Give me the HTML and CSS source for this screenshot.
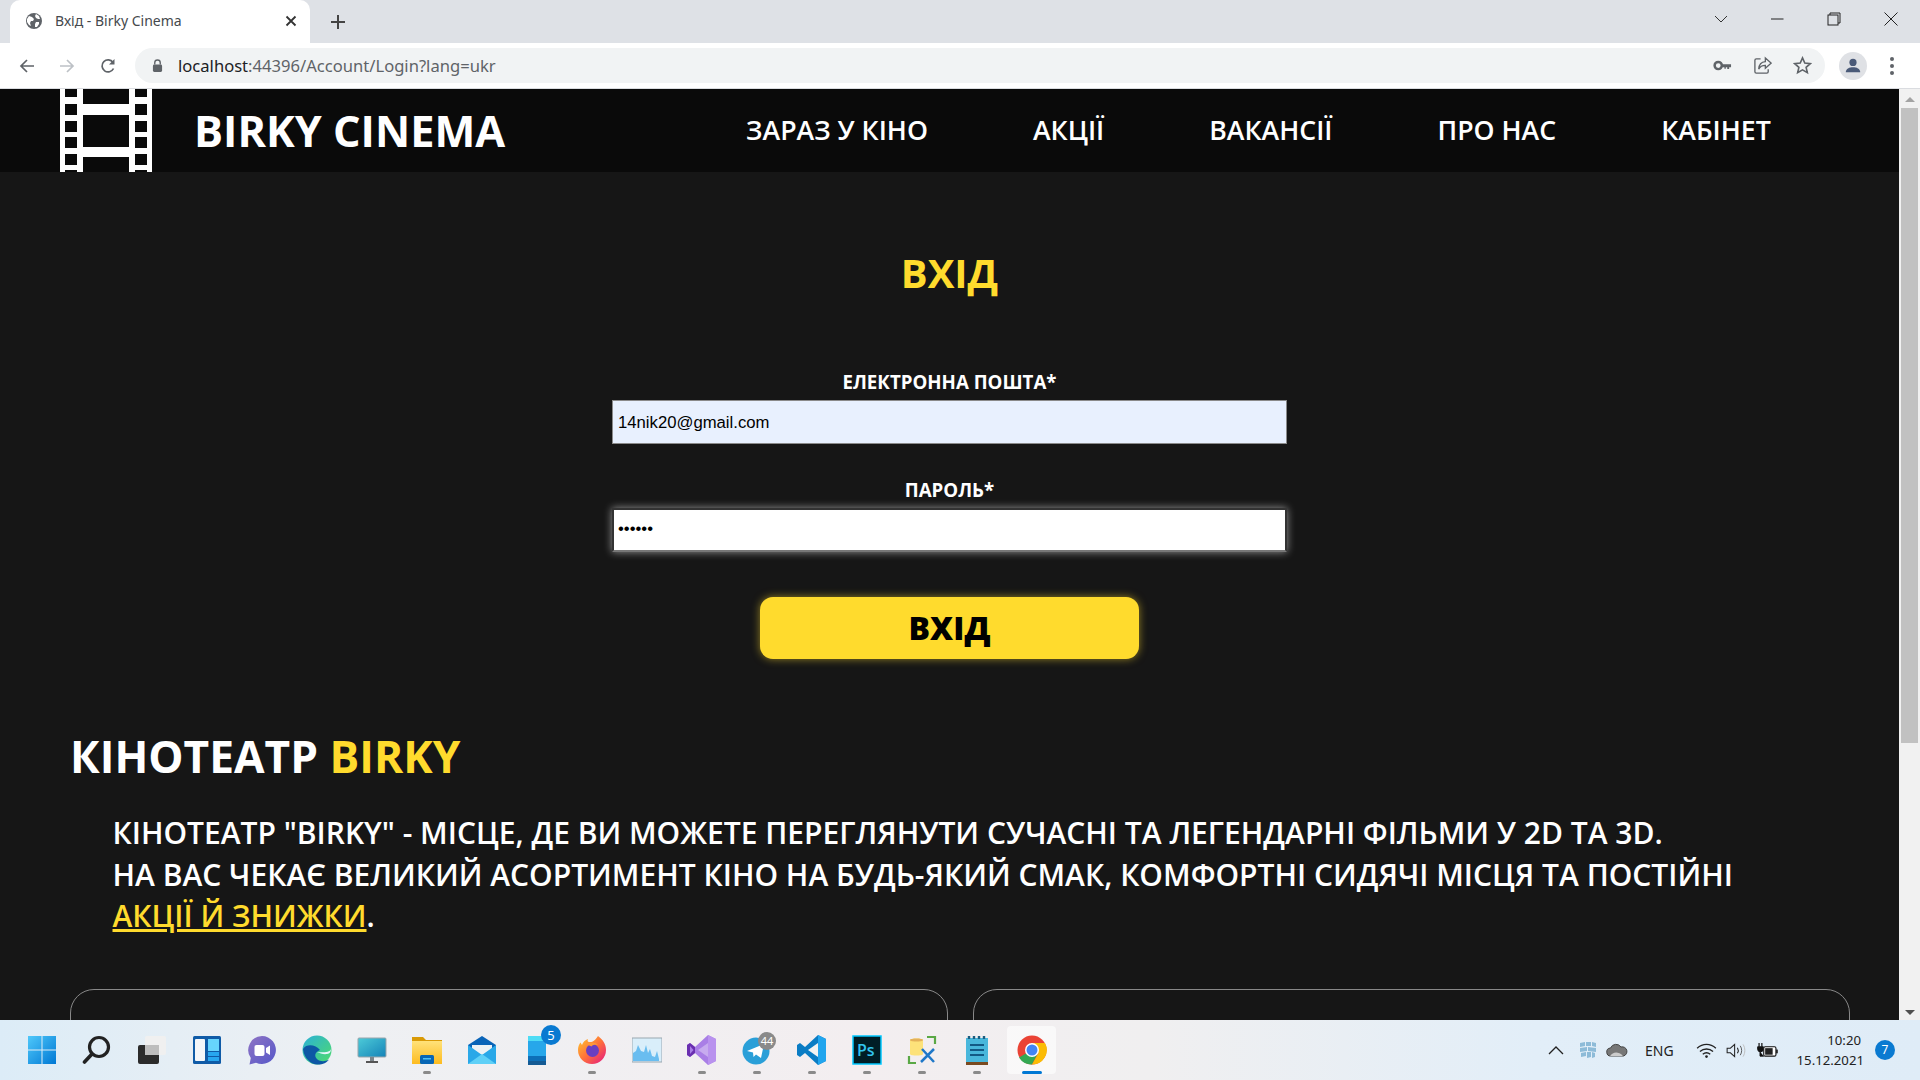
FILE: index.html
```html
<!DOCTYPE html>
<html lang="uk">
<head>
  <meta charset="UTF-8">
  <title>Вхід - Birky Cinema</title>
  <link rel="stylesheet" href="styles.css">
</head>
<body>
  <div class="tabstrip">
    <div class="tab">
      <svg class="favicon" viewBox="0 0 16 16"><circle cx="8" cy="8" r="8" fill="#5f6368"/><path d="M3 3l3 1 2 2-1 2-2 0-1 2 1 3-2-1-2-3 0-3zM10 1l3 2 1 3-2 0-2-1-1-2zM10 9l3 0 0 2-2 3-2 0 0-3z" fill="#fff"/></svg>
      <span class="tab-title">Вхід - Birky Cinema</span>
      <svg class="tab-close" viewBox="0 0 12 12"><path d="M1.5 1.5l9 9M10.5 1.5l-9 9" stroke="#333" stroke-width="1.8"/></svg>
    </div>
    <svg class="new-tab" viewBox="0 0 16 16"><path d="M8 1v14M1 8h14" stroke="#444" stroke-width="2"/></svg>
    <div class="win-controls">
      <svg class="win-btn" viewBox="0 0 14 14"><path d="M1 4l6 6 6-6" fill="none" stroke="#333" stroke-width="1"/></svg>
      <svg class="win-btn" viewBox="0 0 14 14"><path d="M1 7h12.500" stroke="#222" stroke-width="1"/></svg>
      <svg class="win-btn" viewBox="0 0 14 14"><rect x="1" y="3" width="10" height="10" fill="none" stroke="#222"/><path d="M3 3V1h10v10h-2" fill="none" stroke="#222"/></svg>
      <svg class="win-btn" viewBox="0 0 14 14"><path d="M.5.5l13 13M13.500.5l-13 13" stroke="#222" stroke-width="1"/></svg>
    </div>
  </div>

  <div class="toolbar">
    <svg class="tool-icon" viewBox="0 0 16 16"><path d="M15 8H2.500M8 2L2 8l6 6" fill="none" stroke="#5f6368" stroke-width="1.700"/></svg>
    <svg class="tool-icon" viewBox="0 0 16 16"><path d="M1 8h12.500M8 2l6 6-6 6" fill="none" stroke="#bdc1c6" stroke-width="1.700"/></svg>
    <svg class="tool-icon" viewBox="0 0 16 16"><path d="M13.500 10.500A6 6 0 1 1 13 4.500" fill="none" stroke="#5f6368" stroke-width="1.700"/><path d="M14.500 1v5.500H9z" fill="#5f6368"/></svg>
    <div class="omnibox">
      <svg class="lock" viewBox="0 0 12 14"><path d="M3 6V4a3 3 0 0 1 6 0v2" fill="none" stroke="#5f6368" stroke-width="1.500"/><rect x="1" y="6" width="10" height="8" rx="1.500" fill="#5f6368"/></svg>
      <span class="url"><b>localhost</b>:44396/Account/Login?lang=ukr</span>
      <div class="omni-icons">
        <svg class="omni-icon" viewBox="0 0 20 20"><circle cx="5.500" cy="10" r="3.800" fill="none" stroke="#5f6368" stroke-width="2.600"/><path d="M9 8.800h10v3h-2v2h-2v-2h-1.500v1.500H12v-1.500H9z" fill="#5f6368"/></svg>
        <svg class="omni-icon" viewBox="0 0 20 20"><path d="M8 3H3.500A1.500 1.500 0 0 0 2 4.500v12A1.500 1.500 0 0 0 3.500 18h11a1.500 1.500 0 0 0 1.500-1.500V14" fill="none" stroke="#5f6368" stroke-width="1.400"/><path d="M13 2l6 5.500-6 5.500V9.800c-3.500 0-5.500 1-7 4 .3-4.500 3-7.500 7-7.800z" fill="none" stroke="#5f6368" stroke-width="1.400"/></svg>
        <svg class="omni-icon" viewBox="0 0 20 20"><path d="M10 2l2.400 5.400 5.800.6-4.400 3.900 1.300 5.700L10 14.600 4.900 17.600l1.300-5.700L1.800 8l5.800-.6z" fill="none" stroke="#5f6368" stroke-width="1.700"/></svg>
      </div>
    </div>
    <div class="avatar">
      <svg viewBox="0 0 20 20"><circle cx="10" cy="6" r="4" fill="#4a5a78"/><path d="M2 17c0-4 4-5.500 8-5.500s8 1.500 8 5.500z" fill="#4a5a78"/></svg>
    </div>
    <div class="menu-dots"><i></i><i></i><i></i></div>
  </div>

  <div class="viewport">
    <div class="page">
      <header class="site-header">
        <svg class="film-logo" viewBox="0 0 92 83">
          <path fill="#fff" fill-rule="evenodd" d="M0 0h23v83H0zM69 0h23v83H69zM23 15h46v11H23zM23 58h46v10H23z
            M5 0v8h12V0zM5 15v11h12V15zM5 32v11h12V32zM5 48v11h12V48zM5 65v11h12V65zM5 81v2h12v-2z
            M75 0v8h12V0zM75 15v11h12V15zM75 32v11h12V32zM75 48v11h12V48zM75 65v11h12V65zM75 81v2h12v-2z"/>
        </svg>
        <a class="brand">BIRKY CINEMA</a>
        <nav class="site-nav">
          <a>ЗАРАЗ У КІНО</a>
          <a>АКЦІЇ</a>
          <a>ВАКАНСІЇ</a>
          <a>ПРО НАС</a>
          <a>КАБІНЕТ</a>
        </nav>
      </header>

      <main>
        <h1 class="login-title">ВХІД</h1>
        <form class="login-form">
          <label class="field-label">ЕЛЕКТРОННА ПОШТА*</label>
          <input class="field autofilled" type="text" value="14nik20@gmail.com">
          <label class="field-label second">ПАРОЛЬ*</label>
          <input class="field focused" type="password" value="123456">
          <button class="login-btn" type="button">ВХІД</button>
        </form>

        <section class="about">
          <h2 class="about-title">КІНОТЕАТР <span class="yellow">BIRKY</span></h2>
          <p class="about-text">КІНОТЕАТР "BIRKY" - МІСЦЕ, ДЕ ВИ МОЖЕТЕ ПЕРЕГЛЯНУТИ СУЧАСНІ ТА ЛЕГЕНДАРНІ ФІЛЬМИ У 2D ТА 3D.<br>
          НА ВАС ЧЕКАЄ ВЕЛИКИЙ АСОРТИМЕНТ КІНО НА БУДЬ-ЯКИЙ СМАК, КОМФОРТНІ СИДЯЧІ МІСЦЯ ТА ПОСТІЙНІ<br>
          <a class="yellow link">АКЦІЇ Й ЗНИЖКИ</a>.</p>
          <div class="cards">
            <div class="card"></div>
            <div class="card"></div>
          </div>
        </section>
      </main>
    </div>

    <div class="scrollbar">
      <span class="arrow up"></span>
      <div class="thumb"></div>
      <span class="arrow down"></span>
    </div>
  </div>

  <footer class="taskbar">
    <div class="task-icons">
      <div class="task-item">
        <svg viewBox="0 0 30 30"><defs><linearGradient id="win" x1="0" y1="0" x2="1" y2="1"><stop offset="0" stop-color="#4fc8fa"/><stop offset="1" stop-color="#0078d4"/></linearGradient></defs><path fill="url(#win)" d="M1 1h13.500v13.500H1zM15.500 1H29v13.500H15.500zM1 15.500h13.500V29H1zM15.500 15.500H29V29H15.500z"/></svg>
      </div>
      <div class="task-item">
        <svg viewBox="0 0 30 30"><circle cx="17" cy="12" r="9.500" fill="none" stroke="#222" stroke-width="3.200"/><path d="M10 19l-7.500 8" stroke="#222" stroke-width="3.600" stroke-linecap="round"/></svg>
      </div>
      <div class="task-item">
        <svg viewBox="0 0 30 30"><rect x="1" y="10" width="21" height="19" rx="2" fill="#2b2b2b"/><rect x="8" y="1" width="21" height="19" rx="2" fill="#f0f0f0"/><rect x="8" y="10" width="14" height="10" fill="#bdbdbd"/></svg>
      </div>
      <div class="task-item">
        <svg viewBox="0 0 30 30"><rect x="1" y="1" width="28" height="28" rx="1.500" fill="#0f5ba7"/><rect x="3" y="4" width="10" height="22" rx="1" fill="#f3f6f9"/><rect x="16" y="4" width="11" height="12" fill="#67d4fd"/><rect x="16" y="17" width="11" height="4" fill="#27a7f0"/><rect x="16" y="22" width="11" height="4" fill="#27a7f0"/></svg>
      </div>
      <div class="task-item">
        <svg viewBox="0 0 30 30"><defs><linearGradient id="chat" x1="0" y1="0" x2="1" y2="1"><stop offset="0" stop-color="#8f74c4"/><stop offset="1" stop-color="#5557c9"/></linearGradient></defs><path fill="url(#chat)" d="M15 1a14 14 0 1 1-6 26.700L2.500 29.500 3.800 23A14 14 0 0 1 15 1z"/><rect x="7.500" y="10" width="10" height="11" rx="2" fill="#fff"/><path d="M19 13l4-2.500v9.500L19 17.500z" fill="#fff"/></svg>
      </div>
      <div class="task-item">
        <svg viewBox="0 0 30 30"><defs><linearGradient id="edge" x1="0" y1="0" x2="1" y2="1"><stop offset="0" stop-color="#2bb0d8"/><stop offset="1" stop-color="#4fdc6a"/></linearGradient></defs><circle cx="15" cy="15" r="14.500" fill="url(#edge)"/><path d="M1 14C2 24 10 30 16 29.500c5 0 9-2 11-5-4 2.500-9 2-11.500 0-3-2.500-3-6 0-8 1-1 2-1 2.500-1.500C14 10 5 8 1 14z" fill="#0d57a5"/><path d="M15 17c3 .5 13 1 14-3 0 2-1 5-4 5-3.500.5-7-.5-10-2z" fill="#e7f6fb"/></svg>
      </div>
      <div class="task-item">
        <svg viewBox="0 0 30 30"><defs><linearGradient id="mon" x1="0" y1="0" x2="1" y2="1"><stop offset="0" stop-color="#4dcbd8"/><stop offset="1" stop-color="#1583b8"/></linearGradient></defs><rect x="1" y="3" width="28" height="19" rx="1" fill="url(#mon)" stroke="#9aa5ab"/><rect x="13" y="22" width="4" height="4" fill="#7c868c"/><rect x="9" y="26" width="12" height="2" fill="#555"/></svg>
      </div>
      <div class="task-item">
        <svg viewBox="0 0 30 30"><defs><linearGradient id="fold" x1="0" y1="0" x2="0" y2="1"><stop offset="0" stop-color="#ffe27a"/><stop offset="1" stop-color="#fdbb1f"/></linearGradient></defs><path d="M0 2h11l3 3H30v6H0z" fill="#d99a06"/><path d="M0 6h30v23H0z" fill="url(#fold)"/><rect x="8" y="20" width="14" height="9" rx="1.500" fill="#0866b5"/><rect x="11" y="23" width="8" height="1.500" fill="#4fc0f5"/></svg>
        <i class="pip"></i>
      </div>
      <div class="task-item">
        <svg viewBox="0 0 30 30"><path d="M15 1L29 10v19H1V10z" fill="#0a64b8"/><path d="M5 10h20v8l-10 7-10-7z" fill="#eef2f5"/><path d="M1 10l14 10 14-10v19H1z" fill="#2aa8e8"/><path d="M1 29l14-10 14 10z" fill="#5fd0f7"/></svg>
      </div>
      <div class="task-item">
        <svg viewBox="0 0 30 30"><rect x="6" y="1" width="18" height="29" rx="1.500" fill="#27a7ea"/><rect x="6" y="1" width="18" height="5" fill="#4edcf5"/><rect x="6" y="21" width="18" height="5" fill="#0d6fb8"/><rect x="6" y="26" width="18" height="4" fill="#145a94"/></svg>
        <span class="badge blue-badge">5</span>
      </div>
      <div class="task-item">
        <svg viewBox="0 0 30 30"><defs><linearGradient id="ff" x1="0" y1="0" x2="1" y2="1"><stop offset="0" stop-color="#ffcb2e"/><stop offset=".5" stop-color="#ff7139"/><stop offset="1" stop-color="#e31587"/></linearGradient></defs><path fill="url(#ff)" d="M21 1c5 4 8 8 8 14a14 14 0 0 1-28 0c0-3 1-6 2.500-7.500L5 10c1-3 3-5 6-6-1 2 0 3 1 3 3 0 5 0 9-6z"/><circle cx="15.500" cy="15.500" r="6.500" fill="#6a3fc0"/><path d="M9 9c3-2 9-2 12 1-3-.5-6 0-6.500 1.500z" fill="#ff9838"/></svg>
        <i class="pip"></i>
      </div>
      <div class="task-item">
        <svg viewBox="0 0 30 30"><rect x="0" y="3" width="30" height="24" fill="#d9eefa" stroke="#9aa7b0"/><path d="M1 26V18l3-2 2-6 3 6 3 1 2-7 2 8 2-4 2 7 3 1 2-6 2 8v2z" fill="#69bdf0"/></svg>
      </div>
      <div class="task-item">
        <svg viewBox="0 0 30 30"><path d="M21 0l8 4v22l-8 4-13-12-5 4-3-2V10l3-2 5 4z" fill="#a97ee6"/><path d="M21 0v30l8-4V4z" fill="#b992ee"/><path d="M8 12L3 8l-3 2v10l3 2 5-4zM3 11l3.500 4L3 19z" fill="#6a2fb0"/><path d="M21 8v14l-10-7z" fill="#fff" opacity=".35"/></svg>
        <i class="pip"></i>
      </div>
      <div class="task-item">
        <svg viewBox="0 0 30 30"><circle cx="14" cy="16" r="13.500" fill="#2a9fd8"/><path d="M5 16l17-7-3 14-5-3.500-2.500 2.500-.5-4.500z" fill="#fff"/></svg>
        <span class="badge gray-badge">44</span>
        <i class="pip"></i>
      </div>
      <div class="task-item">
        <svg viewBox="0 0 30 30"><path d="M21 0l8 4v22l-8 4-13-12-5 4-3-2V10l3-2 5 4z" fill="#0a7cc4"/><path d="M21 0v30l8-4V4z" fill="#21a5ee"/><path d="M21 8L11 15l10 7z" fill="#f2f2f2"/></svg>
        <i class="pip"></i>
      </div>
      <div class="task-item">
        <svg viewBox="0 0 30 30"><rect x="1" y="1" width="28" height="28" fill="#001d26" stroke="#00c8ff" stroke-width="1.500"/><text x="5" y="21" class="ps-text">Ps</text></svg>
        <i class="pip"></i>
      </div>
      <div class="task-item">
        <svg viewBox="0 0 30 30"><path d="M3 5c0-2 13-2 13 0v14c0 2-13 2-13 0z" fill="#fde27a"/><path d="M3 5c0-2 13-2 13 0s-13 2-13 0z" fill="#e4b15a"/><path d="M20 2h8v7M2 21v7h7" fill="none" stroke="#5aa845" stroke-width="2.200"/><path d="M14 27l13-13M15 14l12 13" stroke="#1f78c8" stroke-width="2.500"/></svg>
        <i class="pip"></i>
      </div>
      <div class="task-item">
        <svg viewBox="0 0 30 30"><rect x="4" y="3" width="22" height="25" fill="#49b7dc"/><rect x="4" y="27" width="22" height="3" fill="#7a4a20"/><path d="M7 1v3M12 1v3M17 1v3M22 1v3" stroke="#1c5e80" stroke-width="2.400"/><path d="M8 10h14M8 15h14M8 20h14" stroke="#135a86" stroke-width="2"/></svg>
        <i class="pip"></i>
      </div>
      <div class="task-item active">
        <svg viewBox="0 0 30 30"><circle cx="15" cy="15" r="14.500" fill="#ea4335"/><path d="M15 15L2 22.500A15 15 0 0 0 15 29.500L21 18z" fill="#34a853"/><path d="M15 8h13a14.500 14.500 0 0 1-13 21.500L21.500 18z" fill="#fbbc05"/><circle cx="15" cy="15" r="7" fill="#fff"/><circle cx="15" cy="15" r="5.500" fill="#4285f4"/></svg>
        <i class="pip"></i>
      </div>
    </div>

    <div class="tray">
      <svg class="tray-chevron" viewBox="0 0 16 10"><path d="M1 9l7-7 7 7" fill="none" stroke="#222" stroke-width="1.300"/></svg>
      <svg class="tray-icon meet" viewBox="0 0 18 18"><path d="M1 2l5-1v4l-5 1zM7 1l5 0v4l-5 0zM13 1l4 1v4l-4-1zM1 7l7-1v4l-7 1zM9 6l8 1v4l-8-1zM2 12l5-1v4l-5 1zM8 11l4 0v5l-4 1zM13 11l3 1v4l-3 1z" fill="#8dbbd8"/></svg>
      <svg class="tray-icon cloud" viewBox="0 0 22 14"><path d="M5 13a4 4 0 0 1-.5-8A6 6 0 0 1 15 4a4.500 4.500 0 0 1 2.500 9z" fill="#777" stroke="#444"/><path d="M4 13c3-4 8-5 13 0z" fill="#ccc"/></svg>
      <span class="tray-lang">ENG</span>
      <svg class="tray-icon wifi" viewBox="0 0 22 16"><path d="M1 5.500c6-5.500 14-5.500 20 0M4 9c4-3.500 10-3.500 14 0M7 12c2.500-2 5.500-2 8 0" fill="none" stroke="#222" stroke-width="1.400"/><circle cx="11" cy="14.500" r="1.400" fill="#222"/></svg>
      <svg class="tray-icon volume" viewBox="0 0 22 16"><path d="M1 5.500h3.500L9 1.500v13l-4.500-4H1z" fill="none" stroke="#222" stroke-width="1.100"/><path d="M12 5c1.200 2 1.200 4 0 6" fill="none" stroke="#222" stroke-width="1.200"/><path d="M15 3c2 3 2 7 0 10" fill="none" stroke="#555" stroke-width="1"/><path d="M18 1.500c2.500 4 2.500 9 0 13" fill="none" stroke="#bbb" stroke-width="1"/></svg>
      <svg class="tray-icon battery" viewBox="0 0 22 16"><path d="M2 0v4M5 0v4" stroke="#111" stroke-width="1.300"/><path d="M.5 4h6v2.500a3 3 0 0 1-6 0zM3 9v5h4" fill="#111" stroke="#111" stroke-width="1"/><rect x="7" y="4" width="13" height="10" rx="1.500" fill="#fff" stroke="#111" stroke-width="1.200"/><rect x="8.500" y="5.500" width="8" height="7" fill="#222"/><rect x="20" y="7" width="2" height="4" fill="#222"/></svg>
      <div class="clock"><span class="clock-time">10:20</span><span>15.12.2021</span></div>
      <span class="notif">7</span>
    </div>
  </footer>
</body>
</html>
```
FILE: styles.css
```css
* {
  box-sizing: border-box;
}
html, body {
  margin: 0;
  height: 100%;
  overflow: hidden;
}
body {
  display: flex;
  flex-direction: column;
  height: 1080px;
  font-family: "Open Sans", sans-serif;
  background: #161616;
}

/* browser top */
.tabstrip {
  height: 43px;
  background: #dee1e6;
  display: flex;
  align-items: flex-end;
  flex-shrink: 0;
}
.tab {
  width: 300px;
  height: 43px;
  margin-left: 10px;
  background: #fff;
  border-radius: 10px 10px 0 0;
  display: flex;
  align-items: center;
  padding: 0 13px 2px 16px;
  position: relative;
}
.favicon {
  width: 16px;
  height: 16px;
  margin-right: 13px;
}
.tab-title {
  font-family: "Noto Sans", sans-serif;
  font-size: 14px;
  color: #45494d;
  flex: 1;
}
.tab-close {
  width: 12px;
  height: 12px;
}
.new-tab {
  width: 16px;
  height: 16px;
  margin: 0 0 13px 20px;
}
.win-controls {
  margin-left: auto;
  display: flex;
  align-self: flex-start;
}
.win-btn {
  width: 14px;
  height: 14px;
  margin: 12px 22px 0 21px;
}
.win-btn:first-child {
  margin-right: 21px;
}
.win-btn:last-child {
  margin-right: 22px;
}

.toolbar {
  height: 46px;
  background: #fff;
  border-bottom: 1px solid #dadce0;
  display: flex;
  align-items: center;
  flex-shrink: 0;
  padding-left: 19px;
}
.tool-icon {
  width: 16px;
  height: 16px;
  margin-right: 24px;
}
.tool-icon:nth-child(2) {
  margin-right: 25px;
}
.tool-icon:nth-child(3) {
  margin-right: 19px;
}
.omnibox {
  width: 1690px;
  height: 35px;
  margin-top: -1px;
  background: #f1f3f4;
  border-radius: 18px;
  display: flex;
  align-items: center;
  padding-left: 17px;
}
.lock {
  width: 11px;
  height: 13px;
  margin-right: 15px;
}
.url {
  font-family: "Noto Sans", sans-serif;
  font-size: 16.600px;
  color: #5f6368;
}
.url b {
  font-weight: 400;
  color: #202124;
}
.omni-icons {
  margin-left: auto;
  display: flex;
  gap: 21px;
  padding-right: 13px;
}
.omni-icon {
  width: 19px;
  height: 19px;
}
.avatar {
  width: 28px;
  height: 28px;
  margin-left: 14px;
  border-radius: 50%;
  background: #dfe1e5;
  display: flex;
  align-items: center;
  justify-content: center;
}
.avatar svg {
  width: 18px;
  height: 18px;
}
.menu-dots {
  margin-left: 23px;
  display: flex;
  flex-direction: column;
  gap: 3px;
}
.menu-dots i {
  width: 4px;
  height: 4px;
  border-radius: 50%;
  background: #5f6368;
}

/* page */
.viewport {
  flex: 1;
  display: flex;
  min-height: 0;
}
.page {
  flex: 1;
  min-width: 0;
  overflow: hidden;
  background: #161616;
  color: #fff;
}
.site-header {
  height: 83px;
  background: #0a0a0a;
  display: flex;
  align-items: center;
  padding-left: 60px;
}
.film-logo {
  width: 92px;
  height: 83px;
  display: block;
}
.brand {
  margin-left: 42px;
  font-size: 43.300px;
  font-weight: 700;
  line-height: 1;
}
.site-nav {
  margin-left: 241px;
  margin-top: -2px;
  display: flex;
  gap: 105px;
  font-size: 26.700px;
  font-weight: 600;
}
.login-title {
  margin: 0;
  padding-top: 73px;
  text-align: center;
  color: #ffdb2d;
  font-size: 40px;
  font-weight: 700;
  line-height: 56px;
}
.login-form {
  width: 675px;
  margin: 67px auto 0;
  display: flex;
  flex-direction: column;
  align-items: center;
}
.field-label {
  font-size: 18.700px;
  font-weight: 700;
  line-height: 27px;
  margin-bottom: 5px;
}
.field-label.second {
  margin-top: 32px;
}
.field {
  width: 100%;
  height: 44px;
  font-family: "Liberation Sans", Arial, sans-serif;
  font-size: 16.700px;
  color: #000;
  outline: none;
}
.autofilled {
  padding: 2px 5px 0;
  background: #e8f0fe;
  border: 1px solid #8a8a8a;
}
.focused {
  padding: 0 4px 2px;
  background: #fff;
  border: 2px solid #333;
  border-bottom-color: #777;
  box-shadow: 0 0 8px rgba(255, 255, 255, 0.55);
}
.login-btn {
  width: 379px;
  height: 62px;
  margin-top: 45px;
  padding: 0 0 2px;
  background: #ffdb2d;
  border: none;
  border-radius: 13px;
  box-shadow: 0 0 8px rgba(255, 219, 45, 0.55);
  font-family: "Open Sans", sans-serif;
  font-size: 32px;
  font-weight: 800;
  color: #000;
}
.about {
  padding: 0 50px 0 70px;
}
.about-title {
  margin: 69px 0 0;
  font-size: 44.300px;
  font-weight: 700;
  line-height: 56px;
}
.yellow {
  color: #ffdb2d;
}
.about-text {
  margin: 28px 0 0 42.500px;
  font-size: 30px;
  font-weight: 600;
  line-height: 41.6px;
  white-space: nowrap;
}
.link {
  text-decoration: underline;
}
.cards {
  margin-top: 52px;
  display: grid;
  grid-template-columns: 878px 877px;
  gap: 25px;
}
.card {
  height: 300px;
  border: 1px solid #888;
  border-radius: 24px;
}

/* scrollbar */
.scrollbar {
  width: 21px;
  background: #f1f1f1;
  display: flex;
  flex-direction: column;
  align-items: center;
  flex-shrink: 0;
}
.thumb {
  width: 17px;
  height: 635px;
  margin-top: 6px;
  background: #c1c1c1;
}
.arrow {
  width: 0;
  height: 0;
  border-left: 5px solid transparent;
  border-right: 5px solid transparent;
}
.arrow.up {
  margin-top: 8px;
  border-bottom: 5px solid #a3a3a3;
}
.arrow.down {
  margin-top: auto;
  margin-bottom: 5px;
  border-top: 5px solid #505050;
}

/* windows taskbar */
.taskbar {
  height: 60px;
  flex-shrink: 0;
  display: flex;
  align-items: stretch;
  background: linear-gradient(90deg, #dcecf7 0%, #eef0f3 18%, #f3eef0 45%, #f0eff0 60%, #e2eef8 80%, #dfecf7 100%);
  color: #222;
  position: relative;
  z-index: 1;
}
.task-icons {
  display: flex;
  padding-left: 14px;
}
.task-item {
  width: 55px;
  display: flex;
  align-items: center;
  justify-content: center;
  position: relative;
}
.task-item svg {
  width: 30px;
  height: 30px;
}
.pip {
  position: absolute;
  left: 24px;
  bottom: 6px;
  width: 8px;
  height: 3px;
  border-radius: 2px;
  background: #8a8a8a;
}
.task-item.active::before {
  content: "";
  position: absolute;
  left: 3px;
  top: 6px;
  width: 49px;
  height: 48px;
  border-radius: 4px;
  background: rgba(255, 255, 255, 0.6);
}
.task-item.active svg {
  position: relative;
}
.task-item.active .pip {
  left: 18px;
  width: 20px;
  background: #0078d4;
}
.badge {
  position: absolute;
  border-radius: 50%;
  color: #fff;
  text-align: center;
  font-family: "Noto Sans", sans-serif;
}
.blue-badge {
  top: 5px;
  left: 32px;
  width: 20px;
  height: 20px;
  background: #0a7ad1;
  font-size: 13px;
  line-height: 20px;
}
.gray-badge {
  top: 12px;
  left: 29px;
  width: 18px;
  height: 18px;
  background: #8a8a8a;
  font-size: 11px;
  line-height: 18px;
}
.ps-text {
  font-family: "Open Sans", sans-serif;
  font-size: 16px;
  font-weight: 600;
  fill: #31c5f0;
}
.tray {
  margin-left: auto;
  display: flex;
  align-items: center;
  padding-right: 25px;
}
.tray-chevron {
  width: 16px;
  height: 10px;
}
.tray-icon {
  display: block;
}
.meet {
  width: 18px;
  height: 18px;
  margin-left: 15px;
}
.cloud {
  width: 22px;
  height: 14px;
  margin-left: 9px;
}
.tray-lang {
  margin-left: 17px;
  width: 30px;
  font-family: "Noto Sans", sans-serif;
  font-size: 14px;
}
.wifi {
  width: 21px;
  height: 15px;
  margin-left: 21px;
}
.volume {
  width: 21px;
  height: 15px;
  margin-left: 9px;
}
.battery {
  width: 21px;
  height: 15px;
  margin-left: 10px;
}
.clock {
  margin-left: 16px;
  width: 70px;
  display: flex;
  flex-direction: column;
  align-items: flex-end;
  font-family: "Noto Sans", sans-serif;
  font-size: 13.200px;
  line-height: 20px;
}
.clock-time {
  margin-right: 3px;
}
.notif {
  margin-left: 11px;
  width: 20px;
  height: 20px;
  border-radius: 50%;
  background: #0a7ad1;
  color: #fff;
  text-align: center;
  font-family: "Noto Sans", sans-serif;
  font-size: 12px;
  line-height: 20px;
}
```
